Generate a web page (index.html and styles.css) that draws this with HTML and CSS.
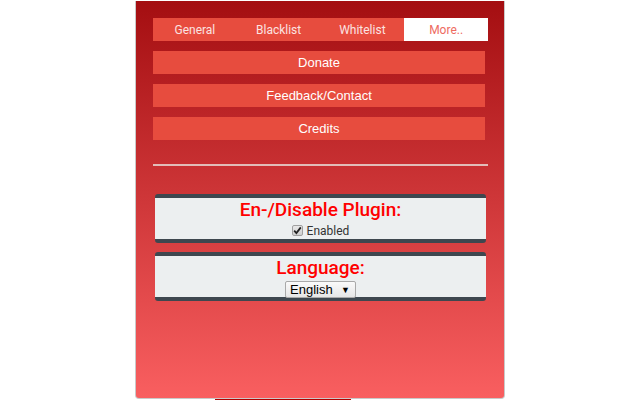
FILE: index.html
```html
<!DOCTYPE html>
<html>
<head>
<meta charset="utf-8">
<link rel="stylesheet" href="styles.css">
</head>
<body>
<div class="wrap">
  <div class="panel">
    <div class="tabs">
      <div class="tab">General</div>
      <div class="tab">Blacklist</div>
      <div class="tab">Whitelist</div>
      <div class="tab active">More..</div>
    </div>
    <div class="btn">Donate</div>
    <div class="btn">Feedback/Contact</div>
    <div class="btn">Credits</div>
    <div class="rule"></div>
    <div class="box">
      <div class="box-title">En-/Disable Plugin:</div>
      <label class="check"><span class="cb"><svg width="9" height="9" viewBox="0 0 9 9"><path d="M1.2 4.6 L3.4 7 L7.8 1.4" fill="none" stroke="#222" stroke-width="1.8"/></svg></span>Enabled</label>
    </div>
    <div class="box">
      <div class="box-title">Language:</div>
      <div class="select">English <span class="arrow">▼</span></div>
    </div>
  </div>
  <div class="strip"></div>
</div>
</body>
</html>
```
FILE: styles.css
```css
html, body {
  margin: 0;
  padding: 0;
  background: #ffffff;
}
.wrap {
  width: 370px;
  margin: 0 auto;
  padding-top: 1px;
}
.panel {
  box-sizing: border-box;
  height: 398px;
  border: 1px solid #c9c9c9;
  border-top: none;
  border-radius: 0 0 4px 4px;
  background: linear-gradient(#a40e11, #f95f60);
  padding: 17px 17px 0 17px;
}
.tabs {
  display: flex;
  width: 335px;
  height: 23px;
  background: #e74c3e;
}
.tab {
  flex: 1;
  display: flex;
  align-items: center;
  justify-content: center;
  font-family: Roboto, "Liberation Sans", sans-serif;
  font-size: 12px;
  color: #fbe3e1;
}
.tab.active {
  background: #ffffff;
  color: #ee6b61;
}
.btn {
  width: 332px;
  height: 23px;
  margin-top: 10px;
  background: #e74c3e;
  color: #ffffff;
  font-family: "Liberation Sans", Arial, sans-serif;
  font-size: 13px;
  display: flex;
  align-items: center;
  justify-content: center;
}
.rule {
  width: 335px;
  height: 2px;
  margin-top: 24px;
  background: #e2bcb8;
}
.box {
  box-sizing: border-box;
  width: 331px;
  height: 49px;
  margin-left: 2px;
  margin-top: 28px;
  background: #eceff0;
  border-top: 4px solid #3e474f;
  border-bottom: 4px solid #3e474f;
  border-radius: 3px;
  display: flex;
  flex-direction: column;
  align-items: center;
}
.box + .box {
  margin-top: 9px;
}
.box-title {
  font-family: Roboto, "Liberation Sans", sans-serif;
  font-weight: 500;
  font-size: 19px;
  line-height: 24px;
  color: #ff0000;
}
.check {
  display: flex;
  align-items: center;
  margin-top: 2px;
  font-family: Roboto, "Liberation Sans", sans-serif;
  font-size: 12px;
  color: #333333;
  line-height: 14px;
}
.cb {
  box-sizing: border-box;
  width: 11px;
  height: 11px;
  margin: -2px 4px 0 0;
  border: 1px solid #a0a0a0;
  border-radius: 2px;
  background: linear-gradient(#e8e8e8, #cfcfcf);
  display: flex;
  align-items: center;
  justify-content: center;
}
.select {
  box-sizing: border-box;
  width: 71px;
  height: 18px;
  margin-top: 1px;
  border: 1px solid #a9a9a9;
  border-radius: 2px;
  background: linear-gradient(#fafafa, #e6e6e6);
  font-family: "Liberation Sans", Arial, sans-serif;
  font-size: 13px;
  color: #000000;
  display: flex;
  align-items: center;
  justify-content: space-between;
  padding: 0 5px 0 4px;
}
.arrow {
  font-size: 9px;
}
.strip {
  width: 136px;
  height: 1px;
  margin-left: 80px;
  background: #b00000;
}
```
